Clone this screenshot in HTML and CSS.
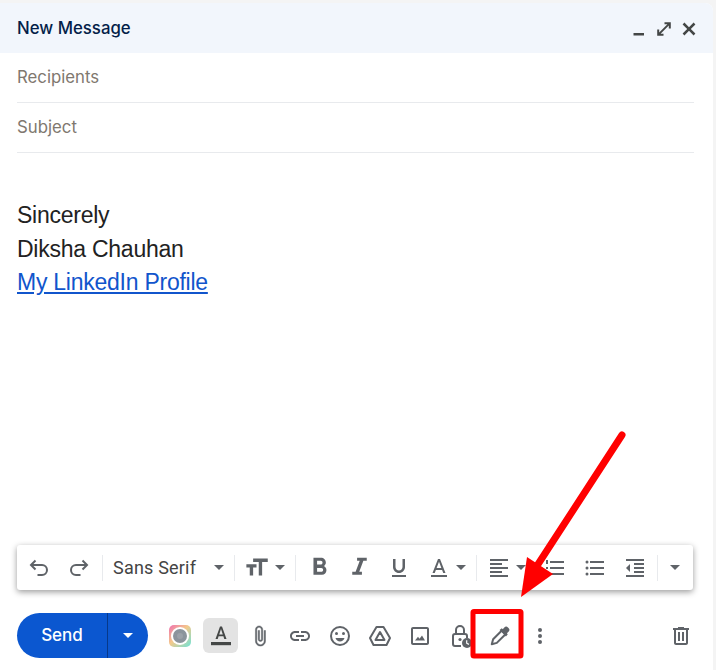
FILE: index.html
```html
<!DOCTYPE html>
<html lang="en">
<head>
<meta charset="utf-8">
<title>New Message</title>
<link rel="stylesheet" href="styles.css">
</head>
<body>
<main class="compose">
  <header class="head">
    <h1 class="title">New Message</h1>
    <div class="winctl">
      <svg class="ic16" viewBox="0 0 16 16"><path d="M2.500 12h10.500v2.400H2.500z"/></svg>
      <svg class="ic16" viewBox="0 0 16 16"><path d="M8.500 1.200h6.300v6.300h-2V4.600L4.600 12.800h2.900v2H1.200V8.500h2v2.900L11.400 3.200H8.500z"/></svg>
      <svg class="ic16" viewBox="0 0 16 16"><path d="M3.400 1.600 8 6.200l4.600-4.600 1.800 1.800L9.800 8l4.600 4.600-1.800 1.800L8 9.800l-4.600 4.600-1.800-1.800L6.200 8 1.600 3.400z"/></svg>
    </div>
  </header>
  <div class="field">Recipients</div>
  <div class="field">Subject</div>
  <section class="body">
    <p class="line">Sincerely</p>
    <p class="line">Diksha Chauhan</p>
    <p class="line"><a class="link" href="#">My LinkedIn Profile</a></p>
  </section>
  <div class="format">
    <span class="tb w40"><svg class="ic24" viewBox="0 0 24 24"><g class="line-ic"><path d="M8.500 13.500 4 9l4.500-4.500M4 9h11a5 5 0 0 1 0 10h-4.500"/></g></svg></span>
    <span class="tb w40"><svg class="ic24" viewBox="0 0 24 24"><g class="line-ic"><path d="M15.500 13.500 20 9l-4.500-4.500M20 9H9a5 5 0 0 0 0 10h4.500"/></g></svg></span>
    <span class="sep first"></span>
    <span class="font">Sans Serif</span>
    <span class="caret c-font"></span>
    <span class="sep s2"></span>
    <span class="tb w24 size"><svg class="ic27" viewBox="0 0 24 24"><path d="M9 4v3h5v12h3V7h5V4H9zm-6 8h3v7h3v-7h3V9H3v3z"/></svg></span>
    <span class="caret c-size"></span>
    <span class="sep s3"></span>
    <span class="tb w40 b"><svg class="ic29" viewBox="0 0 24 24"><path d="M15.600 10.790c.97-.67 1.650-1.770 1.650-2.790 0-2.260-1.750-4-4-4H7v14h7.040c2.090 0 3.710-1.700 3.710-3.790 0-1.520-.86-2.820-2.150-3.420zM10 6.500h3c.83 0 1.500.67 1.500 1.500s-.67 1.500-1.500 1.500h-3v-3zm3.500 9H10v-3h3.500c.83 0 1.500.67 1.500 1.500s-.67 1.500-1.500 1.500z"/></svg></span>
    <span class="tb w40"><svg class="ic29" viewBox="0 0 24 24"><path d="M10 4v2.400h2.210l-3.420 9.200H6V18h8v-2.400h-2.210l3.420-9.200H18V4z"/></svg></span>
    <span class="tb w40"><svg class="ic24" viewBox="0 0 24 24"><path d="M12 17c3.310 0 6-2.690 6-6V3h-2.500v8c0 1.930-1.570 3.500-3.500 3.500S8.500 12.930 8.500 11V3H6v8c0 3.310 2.690 6 6 6zm-7 2v2h14v-2H5z"/></svg></span>
    <span class="tb w40 acolor"><svg class="ic24" viewBox="0 0 24 24"><path d="M11 3 5.500 17h2.250l1.120-3h6.250l1.120 3h2.250L13 3h-2zm-1.380 9L12 5.670 14.380 12H9.620z"/><path d="M4 19h16v2H4z"/></svg></span>
    <span class="caret c-a"></span>
    <span class="sep s4"></span>
    <span class="tb w24 al"><svg class="ic24" viewBox="0 0 24 24"><path d="M15 15H3v2h12v-2zm0-8H3v2h12V7zM3 13h18v-2H3v2zm0 8h18v-2H3v2zM3 3v2h18V3H3z"/></svg></span>
    <span class="caret c-al"></span>
    <span class="tb w40 num"><svg class="ic24" viewBox="0 0 24 24"><path d="M7 11h14v2H7zM7 5h14v2H7zM7 17h14v2H7zM3 4h2v4H3zM3 11h2v2H3zM3 16h2v4H3z"/></svg></span>
    <span class="tb w40"><svg class="ic24" viewBox="0 0 24 24"><circle cx="4" cy="6" r="1.500"/><circle cx="4" cy="12" r="1.500"/><circle cx="4" cy="18" r="1.500"/><path d="M7 5h14v2H7zM7 11h14v2H7zM7 17h14v2H7z"/></svg></span>
    <span class="tb w40"><svg class="ic24" viewBox="0 0 24 24"><path d="M11 17h10v-2H11v2zm-8-5 4 4V8l-4 4zm0 9h18v-2H3v2zM3 3v2h18V3H3zm8 6h10V7H11v2zm0 4h10v-2H11v2z"/></svg></span>
    <span class="sep s5"></span>
    <span class="caret c-more"></span>
  </div>
  <footer class="actions">
    <div class="send">
      <span class="send-label">Send</span>
      <span class="send-more"><span class="caret white"></span></span>
    </div>
    <div class="tools">
      <span class="tool"><svg class="ic24" viewBox="0 0 24 24"><defs><linearGradient id="rb" x1="0" y1="0" x2="1" y2="1"><stop offset="0" stop-color="#f06fb0"/><stop offset=".45" stop-color="#f3c98a"/><stop offset="1" stop-color="#6fe3d8"/></linearGradient></defs><rect x="1" y="1" width="22" height="22" rx="5" fill="url(#rb)"/><circle cx="12" cy="12" r="9" fill="#fff"/><circle cx="12" cy="12" r="7" fill="#8b949c"/><circle cx="12" cy="12" r="3" fill="#9aa1a8"/></svg></span>
      <span class="tool active"><svg class="ic24 dark" viewBox="0 0 24 24"><path d="M11 2.500 6.500 15h2.200l.9-2.800h4.800l.9 2.800h2.200L13 2.500h-2zm-.8 7.900L12 5l1.800 5.400h-3.600z"/><path d="M2 18h20v3.200H2z"/></svg></span>
      <span class="tool"><svg class="ic22 clip" viewBox="0 0 24 24"><path d="M16.500 6v11.500c0 2.210-1.790 4-4 4s-4-1.790-4-4V5c0-1.380 1.120-2.500 2.500-2.500s2.500 1.120 2.500 2.500v10.500c0 .55-.45 1-1 1s-1-.45-1-1V6H10v9.500c0 1.380 1.120 2.500 2.500 2.500s2.500-1.120 2.500-2.500V5c0-2.210-1.790-4-4-4S7 2.790 7 5v12.500c0 3.040 2.460 5.500 5.500 5.500s5.500-2.460 5.500-5.500V6h-1.500z"/></svg></span>
      <span class="tool"><svg class="ic24" viewBox="0 0 24 24"><path d="M3.900 12c0-1.710 1.390-3.100 3.100-3.100h4V7H7c-2.760 0-5 2.240-5 5s2.240 5 5 5h4v-1.900H7c-1.710 0-3.100-1.390-3.100-3.100zM8 13h8v-2H8v2zm9-6h-4v1.900h4c1.710 0 3.100 1.390 3.100 3.100s-1.390 3.100-3.100 3.100h-4V17h4c2.760 0 5-2.240 5-5s-2.240-5-5-5z"/></svg></span>
      <span class="tool"><svg class="ic24" viewBox="0 0 24 24"><g class="line-ic"><circle cx="12" cy="12" r="9"/></g><circle cx="8.500" cy="9.500" r="1.500"/><circle cx="15.500" cy="9.500" r="1.500"/><path d="M7.500 14h9c-.6 2.200-2.400 3.600-4.500 3.600S8.100 16.200 7.500 14z"/></svg></span>
      <span class="tool"><svg class="ic24" viewBox="0 0 24 24"><g class="line-ic round"><path d="M8.500 3h7l6.500 11-3.500 7h-13L2 14z"/><path d="M12 8 16.500 16h-9z"/></g></svg></span>
      <span class="tool"><svg class="ic24" viewBox="0 0 24 24"><path d="M19 5v14H5V5h14m0-2H5c-1.100 0-2 .9-2 2v14c0 1.100.9 2 2 2h14c1.100 0 2-.9 2-2V5c0-1.100-.9-2-2-2z"/><path d="m14 11.500-2.500 3.200-1.500-1.900L7 16.500h10z"/></svg></span>
      <span class="tool"><svg class="ic24" viewBox="0 0 24 24"><g class="line-ic round"><path d="M8 10V6a4 4 0 0 1 8 0v4"/><path d="M13 22H7a2 2 0 0 1-2-2v-8a2 2 0 0 1 2-2h10a2 2 0 0 1 2 2v2"/></g><circle cx="12" cy="15.500" r="1.600"/><circle cx="19" cy="19" r="5"/><path d="M18.700 16.200v3l2.200 1.200" class="tick"/></svg></span>
      <span class="tool"><svg class="ic22" viewBox="0 0 24 24"><g class="line-ic pen"><path d="m3 21 1.500-5.500L14 6l4 4-9.500 9.500z"/></g><path d="M11.500 5.500 14 3.500l1 1 1.700-1.800a2.800 2.800 0 0 1 4 0l.6.600a2.800 2.800 0 0 1 0 4L19.500 9l1 1-2 2.500z"/></svg></span>
      <span class="tool"><svg class="ic24" viewBox="0 0 24 24"><circle cx="12" cy="6" r="2"/><circle cx="12" cy="12" r="2"/><circle cx="12" cy="18" r="2"/></svg></span>
    </div>
    <span class="trash"><svg class="ic24" viewBox="0 0 24 24"><path d="M15 4V3H9v1H4v2h1v13c0 1.100.9 2 2 2h10c1.100 0 2-.9 2-2V6h1V4h-5zm2 15H7V6h10v13zM9 8h2v9H9zm4 0h2v9h-2z"/></svg></span>
  </footer>
</main>
<svg class="marks" viewBox="0 0 716 670">
  <path class="shaft" d="M622 435 533 572"/>
  <path class="head-mark" d="M527 557 553 574 521 597z"/>
  <rect class="box" x="473" y="611.500" width="48" height="44.500" rx="1"/>
</svg>
</body>
</html>
```
FILE: styles.css
```css
* { box-sizing: border-box; }
html, body { margin: 0; height: 100%; }
body {
  position: relative;
  width: 716px;
  height: 670px;
  overflow: hidden;
  background: #f4f4f4;
  font-family: Roboto, "Liberation Sans", sans-serif;
}
.compose {
  width: 713px;
  height: 670px;
  margin-top: 3px;
  background: #fff;
  border-top-right-radius: 8px;
  display: flex;
  flex-direction: column;
  overflow: hidden;
}
.head {
  height: 50px;
  flex: none;
  background: #f2f6fc;
  display: flex;
  align-items: center;
  justify-content: space-between;
  padding: 0 16px 0 17px;
}
.title {
  margin: 0;
  font: 450 16.800px Inter, Roboto, sans-serif;
  color: #041e49;
}
.winctl { display: flex; gap: 9px; padding-top: 2px; }
.ic16 { width: 16px; height: 16px; fill: #444746; display: block; }
.ic22 { width: 22px; height: 22px; fill: #5f6368; display: block; }
.ic24 { width: 24px; height: 24px; fill: #5f6368; display: block; flex: none; }
.ic27 { width: 27px; height: 27px; fill: #5f6368; display: block; flex: none; }
.ic29 { width: 29px; height: 29px; fill: #5f6368; display: block; flex: none; }
.dark { fill: #444746; }
.clip { stroke: #5f6368; stroke-width: .5; }
.line-ic { fill: none; stroke: #5f6368; stroke-width: 2; }
.round { stroke-linejoin: round; }
.pen { stroke-width: 2.200; stroke-linejoin: round; }
.tick { fill: none; stroke: #fff; stroke-width: 1.200; }
.field {
  flex: none;
  height: 50px;
  margin: 0 19px 0 17px;
  border-bottom: 1px solid #e8eaed;
  font: 400 16.800px/49px Inter, Roboto, sans-serif;
  color: #80786f;
}
.body {
  flex: none;
  height: 392px;
  padding: 46px 0 0 17px;
  font: 400 23px/33.500px "Liberation Sans", Arial, sans-serif;
  letter-spacing: -.25px;
  color: #222;
}
.line { margin: 0; }
.link { color: #1155cc; text-decoration: underline; }
.format {
  flex: none;
  width: 676px;
  height: 45px;
  margin-left: 17px;
  background: #fff;
  border-radius: 3px;
  box-shadow: 0 2px 6px rgba(0,0,0,.4);
  display: flex;
  align-items: center;
  padding-left: 2px;
}
.tb { display: flex; align-items: center; justify-content: center; flex: none; }
.w40 { width: 40px; }
.w24 { width: 24px; }
.sep { width: 1px; height: 26px; background: #e8eaed; flex: none; }
.first { margin-left: 3px; }
.font {
  margin-left: 10px;
  width: 88px;
  font: 400 18px Roboto, sans-serif;
  letter-spacing: .2px;
  color: #444;
  flex: none;
}
.caret {
  flex: none;
  width: 0; height: 0;
  border-left: 5px solid transparent;
  border-right: 5px solid transparent;
  border-top: 5px solid #5f6368;
}
.c-font { margin-left: 13px; }
.s2 { margin-left: 10px; }
.size { margin-left: 9px; }
.c-size { margin-left: 7px; }
.s3 { margin-left: 10px; }
.b { margin-left: 3px; }
.c-a { margin-left: -3px; }
.s4 { margin-left: 10px; }
.al { margin-left: 10px; }
.c-al { margin-left: 5px; }
.num { margin-left: 9px; }
.s5 { margin-left: 2px; }
.c-more { margin-left: 12px; }
.actions {
  flex: none;
  height: 45px;
  margin-top: 23px;
  padding: 0 20px 0 17px;
  display: flex;
  align-items: center;
}
.send {
  width: 131px;
  height: 45px;
  border-radius: 23px;
  background: #0b57d0;
  display: flex;
  flex: none;
  color: #fff;
}
.send-label {
  width: 91px;
  border-right: 1px solid #07398a;
  font: 500 17px/45px Inter, Roboto, sans-serif;
  text-align: center;
}
.send-more { flex: 1; display: flex; align-items: center; justify-content: center; }
.white { border-top-color: #fff; }
.tools { display: flex; margin-left: 12px; flex: 1; }
.tool {
  width: 40px;
  height: 35px;
  display: flex;
  align-items: center;
  justify-content: center;
  border-radius: 6px;
  flex: none;
}
.active { width: 35px; margin: 0 2px 0 3px; background: #e3e3e3; }
.trash { flex: none; width: 24px; }
.marks {
  position: absolute;
  left: 0; top: 0;
  width: 716px; height: 670px;
  pointer-events: none;
}
.shaft { stroke: #ff0000; stroke-width: 7; stroke-linecap: round; fill: none; }
.head-mark { fill: #ff0000; }
.box { fill: none; stroke: #ff0000; stroke-width: 5; }
```
